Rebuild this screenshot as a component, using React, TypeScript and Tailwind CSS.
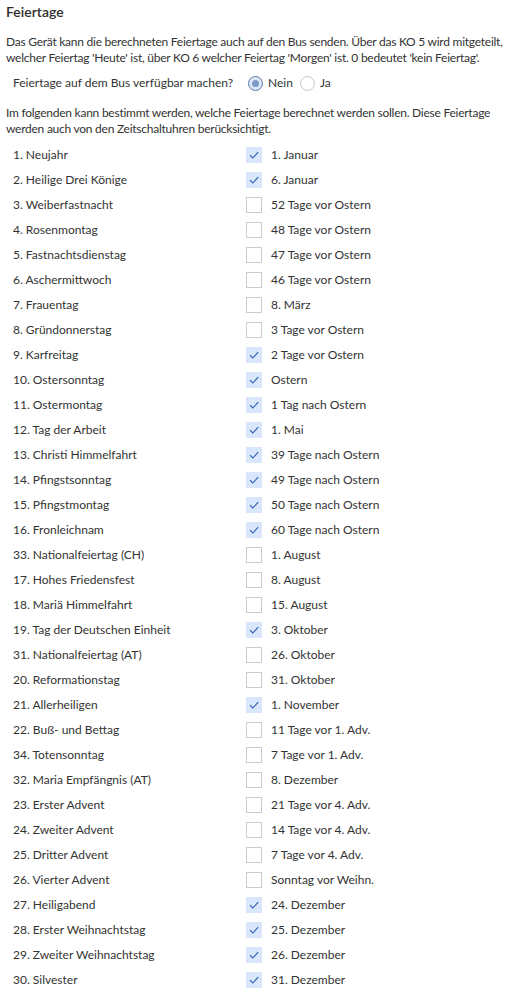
type Holiday = { label: string; date: string; checked: boolean };

const holidays: Holiday[] = [
  { label: "1. Neujahr", date: "1. Januar", checked: true },
  { label: "2. Heilige Drei Könige", date: "6. Januar", checked: true },
  { label: "3. Weiberfastnacht", date: "52 Tage vor Ostern", checked: false },
  { label: "4. Rosenmontag", date: "48 Tage vor Ostern", checked: false },
  { label: "5. Fastnachtsdienstag", date: "47 Tage vor Ostern", checked: false },
  { label: "6. Aschermittwoch", date: "46 Tage vor Ostern", checked: false },
  { label: "7. Frauentag", date: "8. März", checked: false },
  { label: "8. Gründonnerstag", date: "3 Tage vor Ostern", checked: false },
  { label: "9. Karfreitag", date: "2 Tage vor Ostern", checked: true },
  { label: "10. Ostersonntag", date: "Ostern", checked: true },
  { label: "11. Ostermontag", date: "1 Tag nach Ostern", checked: true },
  { label: "12. Tag der Arbeit", date: "1. Mai", checked: true },
  { label: "13. Christi Himmelfahrt", date: "39 Tage nach Ostern", checked: true },
  { label: "14. Pfingstsonntag", date: "49 Tage nach Ostern", checked: true },
  { label: "15. Pfingstmontag", date: "50 Tage nach Ostern", checked: true },
  { label: "16. Fronleichnam", date: "60 Tage nach Ostern", checked: true },
  { label: "33. Nationalfeiertag (CH)", date: "1. August", checked: false },
  { label: "17. Hohes Friedensfest", date: "8. August", checked: false },
  { label: "18. Mariä Himmelfahrt", date: "15. August", checked: false },
  { label: "19. Tag der Deutschen Einheit", date: "3. Oktober", checked: true },
  { label: "31. Nationalfeiertag (AT)", date: "26. Oktober", checked: false },
  { label: "20. Reformationstag", date: "31. Oktober", checked: false },
  { label: "21. Allerheiligen", date: "1. November", checked: true },
  { label: "22. Buß- und Bettag", date: "11 Tage vor 1. Adv.", checked: false },
  { label: "34. Totensonntag", date: "7 Tage vor 1. Adv.", checked: false },
  { label: "32. Maria Empfängnis (AT)", date: "8. Dezember", checked: false },
  { label: "23. Erster Advent", date: "21 Tage vor 4. Adv.", checked: false },
  { label: "24. Zweiter Advent", date: "14 Tage vor 4. Adv.", checked: false },
  { label: "25. Dritter Advent", date: "7 Tage vor 4. Adv.", checked: false },
  { label: "26. Vierter Advent", date: "Sonntag vor Weihn.", checked: false },
  { label: "27. Heiligabend", date: "24. Dezember", checked: true },
  { label: "28. Erster Weihnachtstag", date: "25. Dezember", checked: true },
  { label: "29. Zweiter Weihnachtstag", date: "26. Dezember", checked: true },
  { label: "30. Silvester", date: "31. Dezember", checked: true },
];

const Radio = ({ selected }: { selected: boolean }) =>
  selected ? (
    <span className="w-[15px] h-[15px] rounded-full border border-[#5a7aa8] bg-[#dce7f7] flex items-center justify-center">
      <span className="w-[7px] h-[7px] rounded-full bg-[#7d9bc6]" />
    </span>
  ) : (
    <span className="w-[15px] h-[15px] rounded-full border border-[#c8c8c8] bg-white" />
  );

// checkmark drawn like the native one: thin, blue
const CheckMark = () => (
  <svg width="16" height="16" viewBox="0 0 16 16">
    <path d="M4 8.2 L6.8 11 L12.2 5.2" fill="none" stroke="#2b5cb2" strokeWidth="1.1" />
  </svg>
);

const Box = ({ checked }: { checked: boolean }) =>
  checked ? (
    <span className="w-4 h-4 bg-[#d9e6fb] flex items-center justify-center">
      <CheckMark />
    </span>
  ) : (
    <span className="w-4 h-4 border border-[#cccccc] bg-white" />
  );

export default function App() {
  return (
    <div className="bg-white text-[#333] text-[12px] font-['Segoe_UI','Lato',sans-serif] w-[517px] h-[993px] overflow-hidden px-[6px] pt-[3px]">
      <h1 className="text-[14px] font-semibold text-[#2d2d2d] leading-[18px]">Feiertage</h1>
      <p className="mt-[13px] leading-[16px] tracking-[-0.25px] whitespace-nowrap">
        Das Gerät kann die berechneten Feiertage auch auf den Bus senden. Über das KO 5 wird mitgeteilt,
        <br />
        welcher Feiertag 'Heute' ist, über KO 6 welcher Feiertag 'Morgen' ist. 0 bedeutet 'kein Feiertag'.
      </p>
      <div className="flex items-center mt-[9px] pl-[7px] h-[16px]">
        <span className="w-[235px]">Feiertage auf dem Bus verfügbar machen?</span>
        <Radio selected />
        <span className="ml-[5px] mr-[7px]">Nein</span>
        <Radio selected={false} />
        <span className="ml-[5px]">Ja</span>
      </div>
      <p className="mt-[14px] leading-[16px] tracking-[-0.25px] whitespace-nowrap">
        Im folgenden kann bestimmt werden, welche Feiertage berechnet werden sollen. Diese Feiertage
        <br />
        werden auch von den Zeitschaltuhren berücksichtigt.
      </p>
      <div className="mt-[5px] flex flex-col">
        {holidays.map((h) => (
          <div key={h.label} className="flex items-center h-[25px]">
            <span className="w-[240px] pl-[7px]">{h.label}</span>
            <Box checked={h.checked} />
            <span className="ml-[9px]">{h.date}</span>
          </div>
        ))}
      </div>
    </div>
  );
}
